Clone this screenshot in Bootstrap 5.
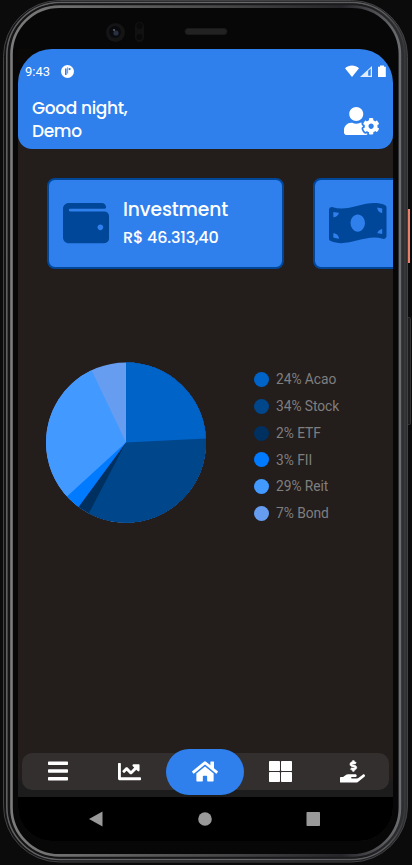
<!DOCTYPE html>
<html lang="en">
<head>
<meta charset="utf-8">
<meta name="viewport" content="width=device-width, initial-scale=1">
<title>Portfolio</title>
<link href="https://cdn.jsdelivr.net/npm/bootstrap@5.3.0/dist/css/bootstrap.min.css" rel="stylesheet">
<style>
html,body{margin:0;height:865px;overflow:hidden;background:#0b0b0b}
body{font-family:Roboto,sans-serif;color:#fff}
svg{display:block;flex:none}
.device{width:412px;height:865px;padding:49px 19px 24px 18px}
.shell{position:absolute;left:0;top:0}
.screen{background:#231d1c;border-radius:34px;position:relative}
.hero{height:99.5px;background:#2f80ed;border-radius:0 0 14px 14px}
.status{height:43px;padding:2px 7px 0 7px;font-size:13px}
.status-app{margin-left:11px}
.geo{font-family:Poppins,Inter,sans-serif;font-weight:500}
.greet{font-size:17px;line-height:23px;letter-spacing:-.35px;padding:4.5px 14.5px 0 14px}
.avatar{margin-top:10.5px}
.deck{padding:29px 0 0 29px;gap:29px}
.tile{flex:none;width:237px;height:91.5px;background:#2f80ed;border:2px solid #004799;border-radius:8px;padding-left:14px;color:#00479a}
.tile-text{margin-left:14px;padding-top:2px}
.tile-name{font-size:18.7px;line-height:27px;letter-spacing:-.12px}
.tile-sum{font-size:16px;line-height:30px;letter-spacing:-.2px}
.chart{margin-top:92.5px;padding-left:27.5px}
.keys{margin-left:47.5px;padding-top:4.7px}
.key{height:26.8px;gap:7px;font-size:13.8px;letter-spacing:-.05px;color:#7f7f7f}
.dot{width:15px;height:15px;border-radius:50%}
.c1{background:#0063c7}.c2{background:#00468b}.c3{background:#003060}.c4{background:#007aff}.c5{background:#4299ff}.c6{background:#669df0}
.dock{height:44px;padding:0 4.5px 7.5px 3.5px;background:linear-gradient(#231d1c 22px,#1c1c1c 32px)}
.tabs{height:36.5px;background:#332f2e;border-radius:10px}
.tab{flex:1 1 0}
.home{flex:none;width:78.5px;height:45.5px;border-radius:23px;background:#2f80ed;margin:-4px 0 -5px}
.sys{height:44px;background:#000}
</style>
<script src="https://cdn.jsdelivr.net/npm/bootstrap@5.3.0/dist/js/bootstrap.bundle.min.js"></script>
</head>
<body>
<div class="device position-relative">
<svg class="shell" width="412" height="865" viewBox="0 0 412 865" fill="none">
<defs>
<linearGradient id="g1" x1="0" y1="0" x2="1" y2="0"><stop offset="0" stop-color="#7c7c7c"/><stop offset=".5" stop-color="#4c4b4c"/><stop offset=".85" stop-color="#26262a"/><stop offset="1" stop-color="#6c6d70"/></linearGradient>
<linearGradient id="g2" x1="0" y1="0" x2="1" y2="0"><stop offset="0" stop-color="#606063"/><stop offset=".6" stop-color="#6a696e"/><stop offset=".95" stop-color="#5a5a5d"/><stop offset="1" stop-color="#38383a"/></linearGradient>
<linearGradient id="g3" x1="0" y1="0" x2="1" y2="0"><stop offset="0" stop-color="#141415"/><stop offset=".9" stop-color="#1c1c1e"/><stop offset="1" stop-color="#2e2f30"/></linearGradient>
</defs>
<rect x="407" y="209" width="3" height="54" fill="#ec7f69"/>
<rect x="407" y="317.5" width="3.5" height="107" rx="1" fill="#1c1c1d" stroke="#343436"/>
<rect x="3.5" y=".5" width="404" height="861.5" rx="56" fill="url(#g3)" stroke="#424245"/>
<rect x="6.8" y="2.5" width="398" height="857" rx="53" stroke="url(#g2)" stroke-width="1.6"/>
<rect x="9" y="4.5" width="393.5" height="853" rx="51" stroke="url(#g3)" stroke-width="2"/>
<rect x="11.5" y="6.6" width="388.4" height="848.8" rx="48" fill="#070708" stroke="url(#g1)" stroke-width="2.6"/>
<rect x="18" y="49" width="14" height="14" fill="#0b0907"/>
<circle cx="115.5" cy="32.5" r="9.5" fill="#141415"/><circle cx="115" cy="32" r="6" fill="#090a0d"/><circle cx="116" cy="33" r="2.6" fill="#283044"/><circle cx="114" cy="30" r=".8" fill="#a9adb4"/>
<rect x="135" y="22" width="9" height="20" rx="4.5" fill="#111112"/><circle cx="139.5" cy="26" r="3" fill="#09090a"/><circle cx="139.5" cy="37" r="3" fill="#09090a"/>
<rect x="185" y="28.5" width="42" height="6" rx="3" fill="#222223" stroke="#19191a"/>
</svg>
<main class="screen d-flex flex-column h-100 overflow-hidden">
<header class="hero">
<div class="status d-flex align-items-center">
<span>9:43</span>
<svg class="status-app" width="13" height="13" viewBox="0 0 13 13"><circle cx="6.5" cy="6.5" r="6.5" fill="#fff"/><path d="M4 10V3.4h1.6V10Z" fill="#2f80ed"/><path d="M6.6 2.4v6.2" stroke="#2f80ed" stroke-width=".8"/><circle cx="8.6" cy="4.1" r="1.1" fill="#2f80ed"/></svg>
<svg class="ms-auto" width="41" height="13" viewBox="0 0 41 13" fill="#fff"><path d="M0 3.3C4-.5 10-.5 14 3.3L7 12Z"/><path d="M15 12 27 1v11Z" fill-opacity=".85"/><path d="M23.2 5.8 25.7 3.6V10.8H23.2Z" fill="#2f80ed"/><path d="M33 1.8h2V.5h4v1.3h1.8V12H33Z"/></svg>
</div>
<div class="d-flex justify-content-between align-items-start geo greet">
<div>Good night,<br>Demo</div>
<svg class="avatar" width="35" height="28" viewBox="0 0 640 512" fill="#fff"><path d="M610.5 373.3c2.6-14.1 2.6-28.5 0-42.6l25.8-14.9c3-1.7 4.3-5.2 3.3-8.5-6.7-21.6-18.2-41.2-33.2-57.4-2.3-2.5-6-3.1-9-1.4l-25.8 14.9c-10.9-9.3-23.4-16.5-36.9-21.3v-29.8c0-3.4-2.4-6.4-5.7-7.1-22.3-5-45-4.8-66.2 0-3.3.7-5.7 3.7-5.7 7.1v29.8c-13.5 4.8-26 12-36.9 21.3l-25.8-14.9c-2.9-1.7-6.7-1.1-9 1.4-15 16.2-26.5 35.8-33.2 57.4-1 3.3.4 6.8 3.3 8.5l25.8 14.9c-2.6 14.1-2.6 28.5 0 42.6l-25.8 14.9c-3 1.7-4.3 5.2-3.3 8.5 6.7 21.6 18.2 41.1 33.2 57.4 2.3 2.5 6 3.1 9 1.4l25.8-14.9c10.9 9.3 23.4 16.5 36.9 21.3v29.8c0 3.4 2.4 6.4 5.7 7.1 22.3 5 45 4.8 66.2 0 3.3-.7 5.7-3.7 5.7-7.1v-29.8c13.5-4.8 26-12 36.9-21.3l25.8 14.9c2.9 1.7 6.7 1.1 9-1.4 15-16.2 26.5-35.8 33.2-57.4 1-3.3-.4-6.8-3.3-8.5l-25.8-14.9zM496 400.5c-26.8 0-48.5-21.8-48.5-48.5s21.8-48.5 48.5-48.5 48.5 21.8 48.5 48.5-21.7 48.5-48.5 48.5zM224 256c70.7 0 128-57.3 128-128S294.7 0 224 0 96 57.3 96 128s57.3 128 128 128zm201.2 226.5c-2.3-1.2-4.6-2.6-6.8-3.9l-7.9 4.6c-6 3.4-12.8 5.3-19.6 5.3-10.9 0-21.4-4.6-28.9-12.6-18.3-19.8-32.3-43.9-40.2-69.6-5.5-17.7 1.9-36.4 17.9-45.7l7.9-4.6c-.1-2.6-.1-5.2 0-7.8l-7.9-4.6c-16-9.2-23.4-28-17.9-45.7.9-2.9 2.2-5.8 3.2-8.7-3.8-.3-7.5-1.2-11.4-1.2h-16.7c-22.2 10.2-46.9 16-72.9 16s-50.6-5.8-72.9-16h-16.7C60.2 288 0 348.2 0 422.4V464c0 26.5 21.5 48 48 48h352c10.1 0 19.5-3.2 27.2-8.5-1.2-3.8-2-7.7-2-11.8v-9.2z"/></svg>
</div>
</header>
<section class="deck d-flex overflow-hidden">
<article class="tile d-flex align-items-center">
<svg width="46" height="46" viewBox="0 0 512 512" fill="currentColor"><path d="M461.2 128H80c-8.84 0-16-7.16-16-16s7.16-16 16-16h384c8.84 0 16-7.16 16-16 0-26.51-21.49-48-48-48H64C28.65 32 0 60.65 0 96v320c0 35.35 28.65 64 64 64h397.2c28.02 0 50.8-21.53 50.8-48V176c0-26.47-22.78-48-50.8-48zM416 336c-17.67 0-32-14.33-32-32s14.33-32 32-32 32 14.33 32 32-14.33 32-32 32z"/></svg>
<div class="geo text-white tile-text"><div class="tile-name">Investment</div><div class="tile-sum">R$ 46.313,40</div></div>
</article>
<article class="tile d-flex align-items-center">
<svg width="57.5" height="46" viewBox="0 0 640 512" fill="currentColor"><path fill-rule="evenodd" d="M621.16 54.46C582.37 38.19 543.55 32 504.75 32c-123.17-.01-246.33 62.34-369.5 62.34-30.89 0-61.76-3.92-92.65-13.72-3.47-1.1-6.95-1.62-10.35-1.62C15.04 79 0 92.32 0 110.81v317.26c0 12.63 7.23 24.6 18.84 29.46C57.63 473.81 96.45 480 135.25 480c123.17 0 246.34-62.35 369.51-62.35 30.89 0 61.76 3.92 92.65 13.72 3.47 1.1 6.95 1.62 10.35 1.62 17.21 0 32.25-13.32 32.25-31.81V83.93c-.01-12.64-7.24-24.6-18.85-29.47zM48 132.22c20.12 5.04 41.12 7.57 62.72 8.93C104.84 170.54 79 192.69 48 192.69v-60.47zM48 417.22v-47.78c34.37 0 62.18 27.27 63.71 61.4-22.53-1.81-43.59-6.31-63.71-13.62zM320 352c-44.19 0-80-42.99-80-96 0-53.02 35.82-96 80-96s80 42.98 80 96c0 53.03-35.83 96-80 96zM592 379.78c-17.52-4.39-35.71-6.85-54.32-8.44 5.87-26.08 27.5-45.88 54.32-49.28v57.72zM592 143.67c-30.89-3.91-54.86-29.7-55.81-61.55 19.54 2.17 38.09 6.23 55.81 12.66v48.89z"/></svg>
</article>
</section>
<section class="chart d-flex">
<svg width="161" height="161" viewBox="-80 -80.5 161 161">
<g transform="rotate(-90)" fill="none" stroke-width="80">
<circle r="40" pathLength="100" stroke="#669df0"/>
<circle r="40" pathLength="100" stroke="#4299ff" stroke-dasharray="92.9 100"/>
<circle r="40" pathLength="100" stroke="#007aff" stroke-dasharray="63.2 100"/>
<circle r="40" pathLength="100" stroke="#003060" stroke-dasharray="60.1 100"/>
<circle r="40" pathLength="100" stroke="#00468b" stroke-dasharray="57.7 100"/>
<circle r="40" pathLength="100" stroke="#0063c7" stroke-dasharray="24.2 100"/>
</g></svg>
<div class="keys">
<div class="key d-flex align-items-center"><span class="dot c1"></span>24% Acao</div>
<div class="key d-flex align-items-center"><span class="dot c2"></span>34% Stock</div>
<div class="key d-flex align-items-center"><span class="dot c3"></span>2% ETF</div>
<div class="key d-flex align-items-center"><span class="dot c4"></span>3% FII</div>
<div class="key d-flex align-items-center"><span class="dot c5"></span>29% Reit</div>
<div class="key d-flex align-items-center"><span class="dot c6"></span>7% Bond</div>
</div>
</section>
<nav class="dock mt-auto">
<div class="tabs d-flex align-items-center">
<div class="tab d-flex justify-content-center"><svg width="20" height="20" viewBox="0 0 20 20" fill="#fff"><rect y=".5" width="20" height="3.5" rx=".7"/><rect y="8.2" width="20" height="3.5" rx=".7"/><rect y="16" width="20" height="3.5" rx=".7"/></svg></div>
<div class="tab d-flex justify-content-center"><svg width="23" height="23" viewBox="0 0 512 512" fill="#fff"><path d="M496 384H64V80c0-8.84-7.16-16-16-16H16C7.16 64 0 71.16 0 80v336c0 17.67 14.33 32 32 32h464c8.84 0 16-7.16 16-16v-32c0-8.84-7.16-16-16-16zM464 96H345.94c-21.38 0-32.09 25.85-16.97 40.97l32.4 32.4L288 242.75l-73.37-73.37c-12.5-12.5-32.76-12.5-45.25 0l-68.69 68.69c-6.25 6.25-6.25 16.38 0 22.63l22.62 22.62c6.25 6.25 16.38 6.25 22.63 0L192 237.25l73.37 73.37c12.5 12.5 32.76 12.5 45.25 0l96-96 32.4 32.4c15.12 15.12 40.97 4.41 40.97-16.97V112c.01-8.84-7.15-16-15.99-16z"/></svg></div>
<div class="home d-flex justify-content-center align-items-center"><svg width="26" height="23" viewBox="0 0 576 512" fill="#fff"><path d="M280.37 148.26L96 300.11V464a16 16 0 0 0 16 16l112.06-.29a16 16 0 0 0 15.92-16V368a16 16 0 0 1 16-16h64a16 16 0 0 1 16 16v95.64a16 16 0 0 0 16 16.05L464 480a16 16 0 0 0 16-16V300L295.67 148.26a12.19 12.19 0 0 0-15.3 0zM571.6 251.47L488 182.56V44.05a12 12 0 0 0-12-12h-56a12 12 0 0 0-12 12v72.61L318.47 43a48 48 0 0 0-61 0L4.34 251.47a12 12 0 0 0-1.6 16.9l25.5 31A12 12 0 0 0 45.15 301l235.22-193.74a12.19 12.19 0 0 1 15.3 0L530.9 301a12 12 0 0 0 16.9-1.6l25.5-31a12 12 0 0 0-1.7-16.93z"/></svg></div>
<div class="tab d-flex justify-content-center"><svg width="23" height="21" viewBox="0 0 23 21" fill="#fff"><rect width="11" height="10" rx=".8"/><rect x="12" width="11" height="10" rx=".8"/><rect y="11" width="11" height="10" rx=".8"/><rect x="12" y="11" width="11" height="10" rx=".8"/></svg></div>
<div class="tab d-flex justify-content-center"><svg width="25" height="23" viewBox="0 0 576 512" fill="#fff"><path transform="translate(4 0)" stroke="#fff" stroke-width="10" d="M271.06 144.3l54.27 14.3a8.59 8.59 0 0 1 6.63 8.1c0 4.6-4.09 8.4-9.12 8.4h-35.6a30 30 0 0 1-11.19-2.2c-5.24-2.2-11.28-1.7-15.3 2l-19 17.5a11.68 11.68 0 0 0-2.25 2.66 11.42 11.42 0 0 0 3.88 15.74 83.77 83.77 0 0 0 34.51 11.5V240c0 8.8 7.83 16 17.37 16h17.37c9.55 0 17.38-7.2 17.38-16v-17.6c32.93-3.6 57.84-31 53.5-63-3.15-23-22.46-41.3-46.56-47.7L282.68 97.4a8.59 8.59 0 0 1-6.63-8.1c0-4.6 4.09-8.4 9.12-8.4h35.6A30 30 0 0 1 332 83.1c5.23 2.2 11.28 1.7 15.3-2l19-17.5A11.31 11.31 0 0 0 368.47 61a11.43 11.43 0 0 0-3.84-15.78 83.82 83.82 0 0 0-34.52-11.5V16c0-8.8-7.82-16-17.37-16h-17.37C285.82 0 278 7.2 278 16v17.6c-32.89 3.6-57.85 31-53.51 63 3.15 23 22.47 41.3 46.57 47.7z"/><path d="M565.3 328.1c-11.8-10.7-30.2-10-42.6 0L430.3 402c-11.3 9.1-25.4 14-40 14H272c-8.8 0-16-7.2-16-16s7.2-16 16-16h78.3c15.9 0 30.7-10.9 33.3-26.6 3.3-20-12.1-37.4-31.6-37.4H192c-27 0-53.1 9.3-74.1 26.3L71.4 384H16c-8.8 0-16 7.2-16 16v96c0 8.8 7.2 16 16 16h356.8c14.5 0 28.6-4.9 40-14L564 377c15.2-12.1 16.4-35.3 1.3-48.9z"/></svg></div>
</div>
</nav>
<footer class="sys d-flex align-items-center">
<svg width="375" height="44" viewBox="0 0 375 44" fill="#999"><path d="M71 22 84.5 14.5v15Z"/><circle cx="187" cy="22" r="6.8"/><rect x="288.5" y="15" width="13.5" height="14" rx=".8"/></svg>
</footer>
</main>
</div>
</body>
</html>
